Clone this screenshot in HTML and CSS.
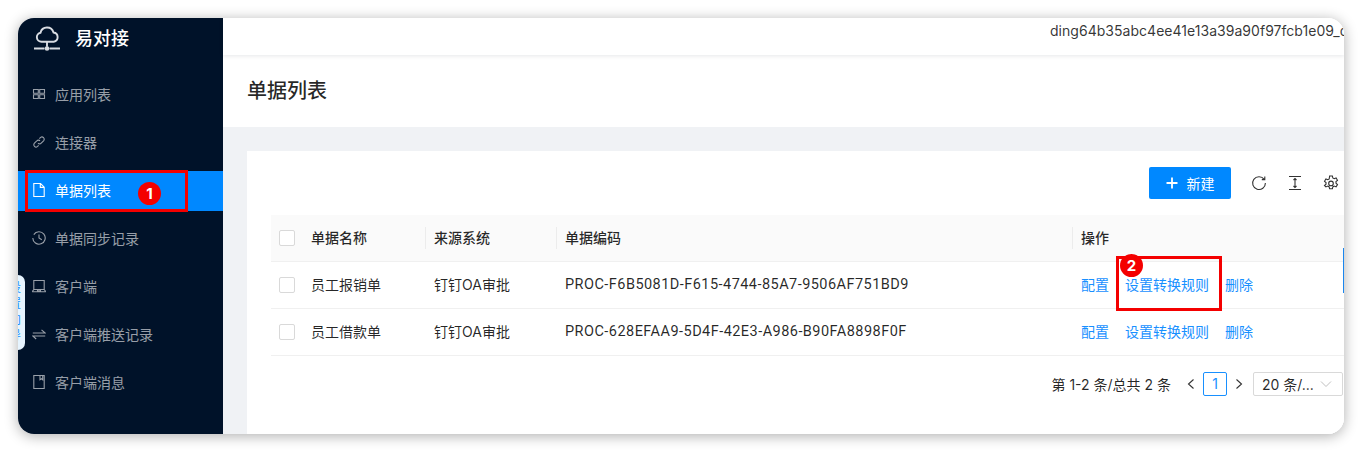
FILE: index.html
```html
<!DOCTYPE html>
<html lang="zh-CN">
<head>
<meta charset="utf-8">
<title>单据列表</title>
<link rel="stylesheet" href="styles.css">
</head>
<body>
<div class="window">
  <aside class="sider">
    <div class="brand">
      <svg class="brand-icon" width="30" height="30" viewBox="0 0 30 30" fill="none" stroke="#d8dce2" stroke-width="1.9"><path d="M9.500 17.800a4.600 4.600 0 0 1-1-9.100 6.700 6.700 0 0 1 13-.2 4.700 4.700 0 0 1 .2 9.300z"/><path d="M15 17.800v5"/><path d="M2 24.500h10.500M17.500 24.500H28"/><circle cx="15" cy="24.500" r="2.300" fill="#d8dce2" stroke="none"/></svg>
      <span class="brand-name">易对接</span>
    </div>
    <nav class="menu">
      <a class="item"><svg class="ico" viewBox="0 0 14 14"><path d="M1.500 2.500h4.800v3.700H1.500zM7.700 2.500h4.800v3.700H7.700zM1.500 7.800h4.800v3.700H1.500zM7.700 7.800h4.800v3.700H7.700z"/></svg>应用列表</a>
      <a class="item"><svg class="ico" viewBox="0 0 14 14"><path d="M6 8.200a2.200 2.200 0 0 0 3.200 0l2.600-2.600a2.300 2.300 0 0 0-3.200-3.200L7.400 3.600M8 5.800a2.200 2.200 0 0 0-3.200 0L2.200 8.400a2.300 2.300 0 0 0 3.200 3.200l1.200-1.200"/></svg>连接器</a>
      <a class="item active"><svg class="ico" viewBox="0 0 14 14"><path d="M1.800.5h6.700l3.700 3.700v9.300H1.800zM8.300.7v3.700h3.700"/></svg>单据列表</a>
      <a class="item"><svg class="ico" viewBox="0 0 14 14"><path d="M1.800 3.600A6.200 6.200 0 1 1 .8 7M7 3.400V7l2.800 1.700"/></svg>单据同步记录</a>
      <a class="item"><svg class="ico" viewBox="0 0 14 14"><path d="M1.800 1.500h10.400v9H1.800zM.2 12.800h13.600M1.800 10.500.2 12.800M12.200 10.500l1.600 2.300M5.500 10.500v1.300h3v-1.300"/></svg>客户端</a>
      <a class="item"><svg class="ico" viewBox="0 0 14 14"><path d="M.8 6h12.400L9.500 2.800M13.200 9H.8l3.400 3"/></svg>客户端推送记录</a>
      <a class="item"><svg class="ico" viewBox="0 0 14 14"><path d="M1.800.5h10.400v13H1.800zM8 .5v4.300l1.500-1 1.200 1V.5"/></svg>客户端消息</a>
    </nav>
  </aside>

  <main class="main">
    <header class="topbar"><span class="account">ding64b35abc4ee41e13a39a90f97fcb1e09_d</span></header>
    <section class="page-head"><h1>单据列表</h1></section>
    <section class="content">
      <div class="card">
        <div class="toolbar">
          <button class="btn-new"><svg width="12" height="12" viewBox="0 0 12 12"><path d="M6 .5v11M.5 6h11" stroke="#fff" stroke-width="1.800" fill="none"/></svg>新建</button>
          <svg class="tool" viewBox="0 0 16 16"><path d="M13.200 4.400A6.400 6.400 0 1 0 14.400 8M13.800 1.600v3h-3"/></svg>
          <svg class="tool" viewBox="0 0 16 16"><path d="M2 1.500h12M2 14.500h12M8 3.500v9M6.500 5 8 3.500 9.500 5M6.500 11 8 12.500 9.500 11"/></svg>
          <svg class="tool" viewBox="0 0 16 16"><path d="M6.600 1h2.800l.4 2 1.400.7 1.900-.8 1.400 2.400-1.500 1.300v1.600l1.500 1.300-1.400 2.400-1.900-.8-1.400.8-.4 1.900H6.600l-.4-1.900-1.400-.8-1.900.8L1.500 10.500 3 9.200V7.600L1.500 6.300l1.400-2.400 1.900.8 1.400-.7z"/><circle cx="8" cy="8.400" r="2.300"/></svg>
        </div>
        <div class="table">
          <div class="row head">
            <span class="c-check"><i class="box"></i></span>
            <span class="c-name sep">单据名称</span>
            <span class="c-src sep">来源系统</span>
            <span class="c-code sep head-code">单据编码</span>
            <span class="c-act">操作</span>
          </div>
          <div class="row">
            <span class="c-check"><i class="box"></i></span>
            <span class="c-name">员工报销单</span>
            <span class="c-src">钉钉OA审批</span>
            <span class="c-code">PROC-F6B5081D-F615-4744-85A7-9506AF751BD9</span>
            <span class="c-act"><a>配置</a><a>设置转换规则</a><a>删除</a></span>
          </div>
          <div class="row">
            <span class="c-check"><i class="box"></i></span>
            <span class="c-name">员工借款单</span>
            <span class="c-src">钉钉OA审批</span>
            <span class="c-code">PROC-628EFAA9-5D4F-42E3-A986-B90FA8898F0F</span>
            <span class="c-act"><a>配置</a><a>设置转换规则</a><a>删除</a></span>
          </div>
        </div>
        <div class="pager">
          <span class="total">第 1-2 条/总共 2 条</span>
          <svg class="arrow" viewBox="0 0 10 12"><path d="M7.500 1.500 2.500 6l5 4.500"/></svg>
          <span class="page-num">1</span>
          <svg class="arrow" viewBox="0 0 10 12"><path d="M2.500 1.500 7.500 6l-5 4.500"/></svg>
          <span class="size">20 条/...<svg class="chev" viewBox="0 0 12 8"><path d="M1 1.500 6 6.500l5-5"/></svg></span>
        </div>
      </div>
    </section>
  </main>

  <div class="side-tab"><span>设置向导</span></div>
  <div class="scroll-mark"></div>
  <div class="mark mark-one"></div>
  <b class="badge badge-one">1</b>
  <div class="mark mark-two"></div>
  <b class="badge badge-two">2</b>
</div>
</body>
</html>
```

FILE: styles.css
```css
* { box-sizing: border-box; }
html, body { margin: 0; height: 100%; }
body {
  background: #fff;
  padding: 18px;
  height: 452px;
  overflow: hidden;
  font-family: Inter, "Noto Sans CJK SC", sans-serif;
  font-size: 14px;
  color: rgba(0,0,0,.85);
}
.window {
  position: relative;
  display: flex;
  width: 1326px;
  height: 416px;
  border-radius: 16px;
  overflow: hidden;
  background: #fff;
}
body::before {
  content: "";
  position: absolute;
  left: 18px; top: 18px;
  width: 1326px; height: 416px;
  border-radius: 16px;
  box-shadow: 0 2px 14px rgba(0,0,0,.32);
}
.sider { width: 205px; flex: none; background: #001229; }
.brand { display: flex; align-items: center; height: 42px; padding-left: 14px; gap: 13px; margin-bottom: 15px; }
.brand-icon { flex: none; }
.brand-name { color: #fff; font-size: 18px; font-weight: 500; line-height: 24px; }
.menu { display: flex; flex-direction: column; gap: 8px; }
.item {
  display: flex; align-items: center; gap: 9px;
  height: 40px; padding: 0 0 2px 14px;
  color: rgba(255,255,255,.6);
  font-size: 14px;
}
.item.active { background: #0088ff; color: #fff; }
.ico { width: 14px; height: 14px; flex: none; fill: none; stroke: currentColor; stroke-width: 1.100; }
.main { flex: 1; min-width: 0; display: flex; flex-direction: column; }
.topbar {
  height: 37px; flex: none; display: flex; justify-content: flex-end; overflow: hidden;
  box-shadow: 0 1px 4px rgba(0,21,41,.1);
  position: relative;
}
.account { white-space: nowrap; width: 294px; flex: none; overflow: hidden; padding-top: 4px; font-size: 14px; line-height: 18px; letter-spacing: .03px; color: rgba(0,0,0,.8); }
.page-head { height: 72px; flex: none; background: #fff; padding: 0 24px; display: flex; align-items: center; }
.page-head h1 { margin: 0; font-size: 20px; font-weight: 500; line-height: 28px; color: rgba(0,0,0,.85); }
.content { flex: 1; background: #f0f2f5; padding: 24px 0 0 24px; min-height: 0; }
.card { background: #fff; height: 100%; padding: 16px 0 0 24px; width: 1120px; }
.toolbar { display: flex; align-items: center; height: 32px; width: 1068px; margin-bottom: 16px; justify-content: flex-end; }
.btn-new {
  display: flex; align-items: center; justify-content: center; gap: 9px;
  width: 82px; height: 32px; border: 0; border-radius: 2px;
  background: #0088ff; color: #fff; font: inherit; font-size: 14px; margin-right: 20px; padding: 0;
}
.tool { width: 16px; height: 16px; fill: none; stroke: #333; stroke-width: 1.100; flex: none; margin-left: 20px; }
.btn-new + .tool { margin-left: 0; }
.table { width: 1073px; }
.row { display: flex; align-items: center; height: 47px; border-bottom: 1px solid #f0f0f0; font-size: 14px; }
.row.head { background: #fafafa; font-weight: 500; }
.row > span { display: block; line-height: 22px; white-space: nowrap; position: relative; }
.c-check { width: 40px; padding-left: 8px; height: 16px; line-height: 16px !important; }
.box { display: block; width: 16px; height: 16px; border: 1px solid #d9d9d9; border-radius: 2px; background: #fff; }
.c-name { width: 123px; }
.c-src { width: 131px; }
.c-code { width: 516px; font-family: Roboto, "Noto Sans CJK SC", sans-serif; font-size: 14.5px; letter-spacing: .46px; }
.head-code { font-size: 14px; letter-spacing: 0; }
.sep::after { content: ""; position: absolute; right: 8px; top: 0; width: 1px; height: 22px; background: #ececec; }
.c-act { display: flex !important; gap: 16px; }
.c-act a { color: #1890ff; }
.pager { display: flex; align-items: center; height: 24px; margin-top: 16px; width: 1072px; justify-content: flex-end; }
.total { margin-right: 15px; font-size: 14px; }
.arrow { width: 10px; height: 12px; fill: none; stroke: #333; stroke-width: 1.100; flex: none; }
.page-num { width: 24px; height: 24px; border: 1px solid #1890ff; border-radius: 2px; color: #1890ff; text-align: center; line-height: 22px; margin: 0 7px; }
.size { display: flex; align-items: center; justify-content: space-between; width: 90px; height: 24px; border: 1px solid #d9d9d9; border-radius: 2px; margin-left: 9px; padding: 0 10px 0 8px; }
.chev { width: 12px; height: 8px; fill: none; stroke: #bfbfbf; stroke-width: 1; }
.side-tab {
  position: absolute; left: 0; top: 257px; width: 7px; height: 75px;
  background: #e6f4ff; border-radius: 0 7px 7px 0; overflow: hidden;
}
.side-tab span { display: block; width: 12px; margin-left: -9px; padding-top: 5px; color: #1890ff; font-size: 12px; line-height: 16px; }
.scroll-mark { position: absolute; right: 0; top: 230px; width: 1px; height: 45px; background: #1a86ee; }
.mark { position: absolute; border: 3px solid #f40000; }
.mark-one { left: 7px; top: 152px; width: 163px; height: 42px; }
.mark-two { left: 1098px; top: 238px; width: 106px; height: 55px; }
.badge {
  position: absolute; width: 23px; height: 23px; border-radius: 50%;
  background: #f40000; color: #fff; font-size: 15px; font-weight: 700;
  text-align: center; line-height: 23px;
}
.badge-one { left: 120px; top: 164px; }
.badge-two { left: 1102px; top: 236px; }
```
